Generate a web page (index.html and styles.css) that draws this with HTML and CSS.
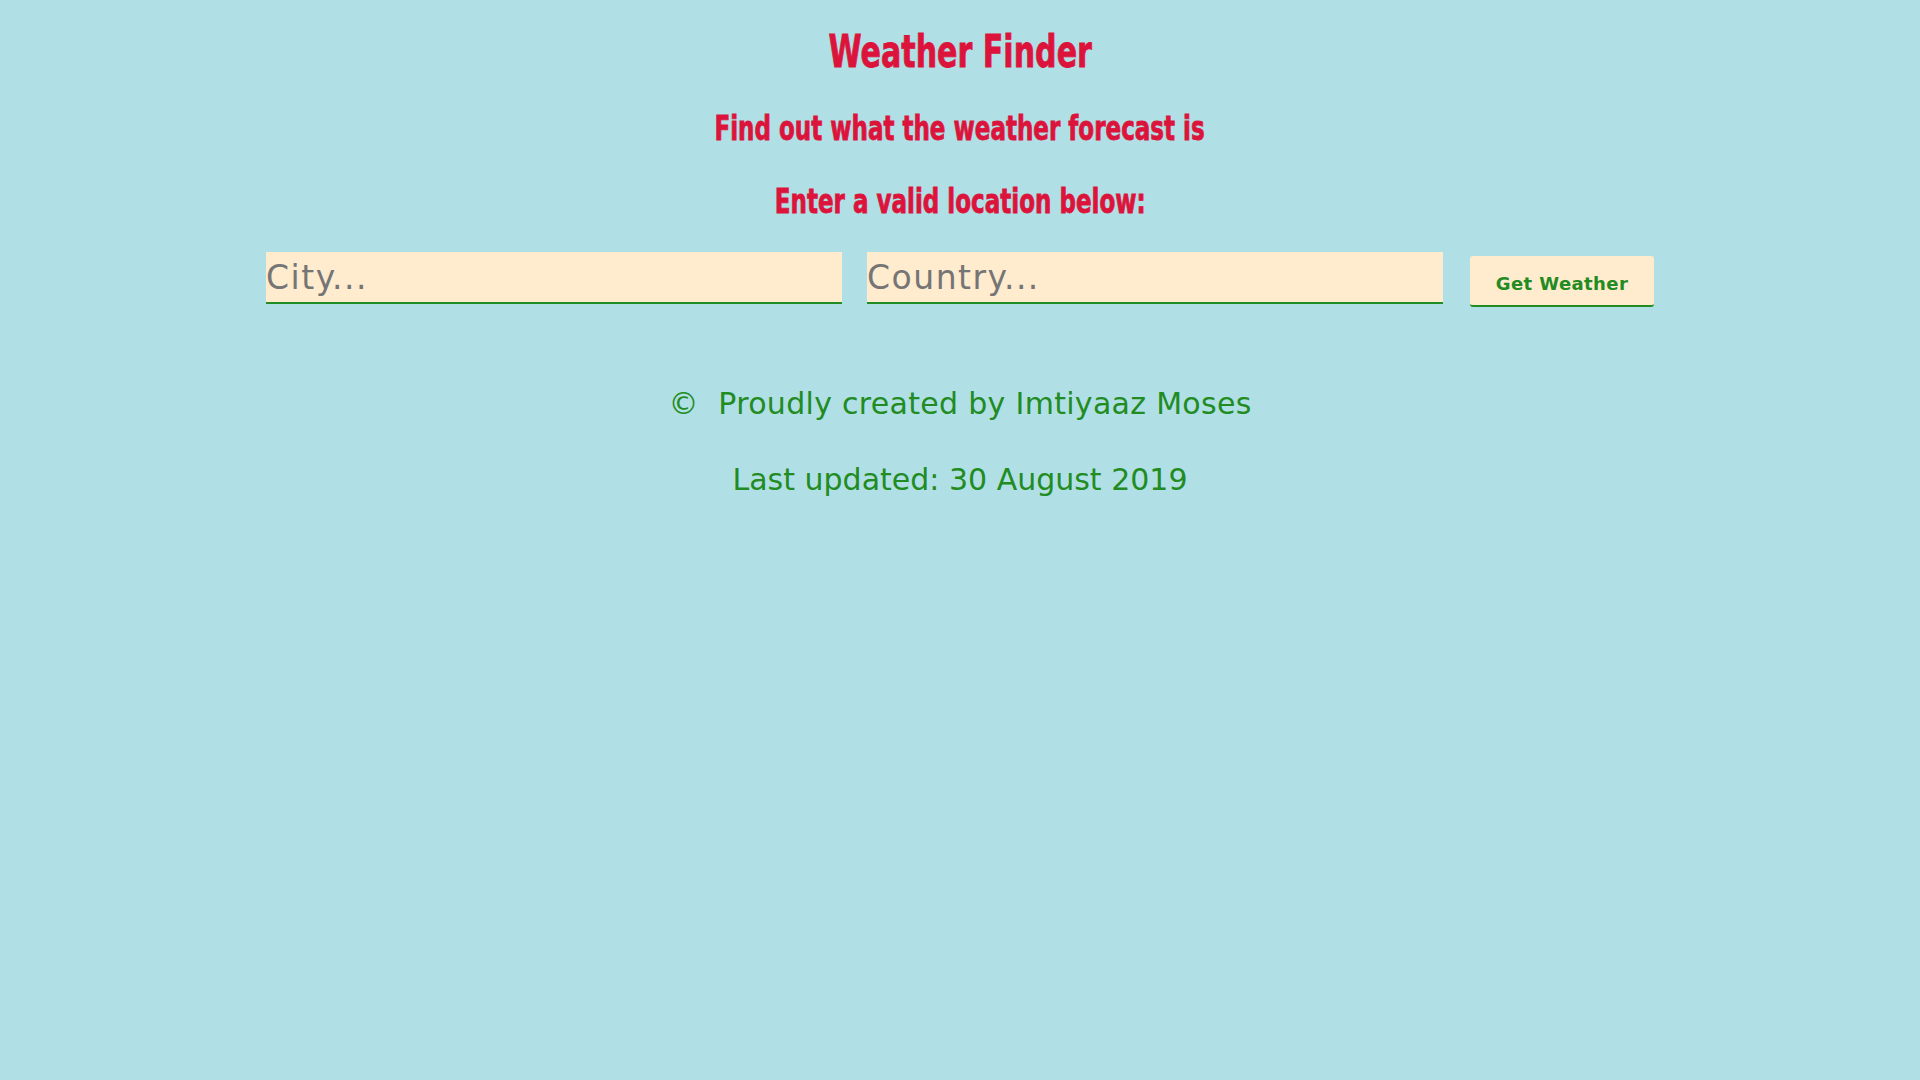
FILE: index.html
```html
<!DOCTYPE html>
<html lang="en">
<head>
<meta charset="utf-8">
<title>Weather Finder</title>
<link rel="stylesheet" href="styles.css">
</head>
<body>
<main class="page">
  <header class="intro">
    <h1 class="title"><span class="squeeze">Weather Finder</span></h1>
    <h2 class="subtitle"><span class="squeeze">Find out what the weather forecast is</span></h2>
    <h3 class="prompt"><span class="squeeze">Enter a valid location below:</span></h3>
  </header>
  <form class="search">
    <input class="field" type="text" placeholder="City...">
    <input class="field" type="text" placeholder="Country...">
    <button class="btn" type="button">Get Weather</button>
  </form>
  <footer class="footer">
    <p class="credit">&copy;&nbsp; Proudly created by Imtiyaaz Moses</p>
    <p class="credit">Last updated: 30 August 2019</p>
  </footer>
</main>
</body>
</html>
```
FILE: styles.css
```css
html, body {
  margin: 0;
  padding: 0;
}
body {
  background: #b0e0e6;
  min-height: 1080px;
}
.page {
  padding-top: 27px;
  text-align: center;
}
.intro {
  display: flex;
  flex-direction: column;
  align-items: center;
}
.title, .subtitle, .prompt {
  margin: 0;
  color: #dc143c;
  font-family: "DejaVu Sans Condensed", "Liberation Sans", sans-serif;
  font-weight: 700;
  -webkit-text-stroke: 0.8px #dc143c;
}
.squeeze {
  display: inline-block;
  transform: scaleX(0.753);
  transform-origin: center;
  white-space: nowrap;
}
.title .squeeze {
  transform: scaleX(0.76);
}
.title {
  font-size: 44px;
  line-height: 50px;
}
.subtitle {
  font-size: 34px;
  line-height: 40px;
  margin-top: 31px;
}
.prompt {
  font-size: 34px;
  line-height: 40px;
  margin-top: 33px;
}
.search {
  display: flex;
  justify-content: center;
  align-items: flex-start;
  gap: 25px;
  margin-top: 31px;
}
.field {
  box-sizing: border-box;
  width: 576px;
  height: 52px;
  margin: 0;
  padding: 0;
  border: none;
  border-bottom: 2px solid #228b22;
  background: #ffebcd;
  font-family: "DejaVu Sans", sans-serif;
  font-size: 33px;
  letter-spacing: 1.5px;
  color: #555;
  outline: none;
}
.field::placeholder {
  color: #757575;
}
.btn {
  box-sizing: border-box;
  width: 184px;
  height: 51px;
  margin: 4px 0 0 2px;
  padding: 5px 0 0;
  border: none;
  border-bottom: 2px solid #228b22;
  border-radius: 3px;
  background: #ffebcd;
  color: #228b22;
  font-family: "DejaVu Sans", sans-serif;
  font-weight: 700;
  font-size: 18px;
  letter-spacing: 0.4px;
}
.footer {
  margin-top: 74px;
}
.credit {
  margin: 0 0 31px;
  color: #228b22;
  font-family: "DejaVu Sans", sans-serif;
  font-size: 30px;
  line-height: 45px;
}
.credit:first-child {
  letter-spacing: 0.3px;
}
```
